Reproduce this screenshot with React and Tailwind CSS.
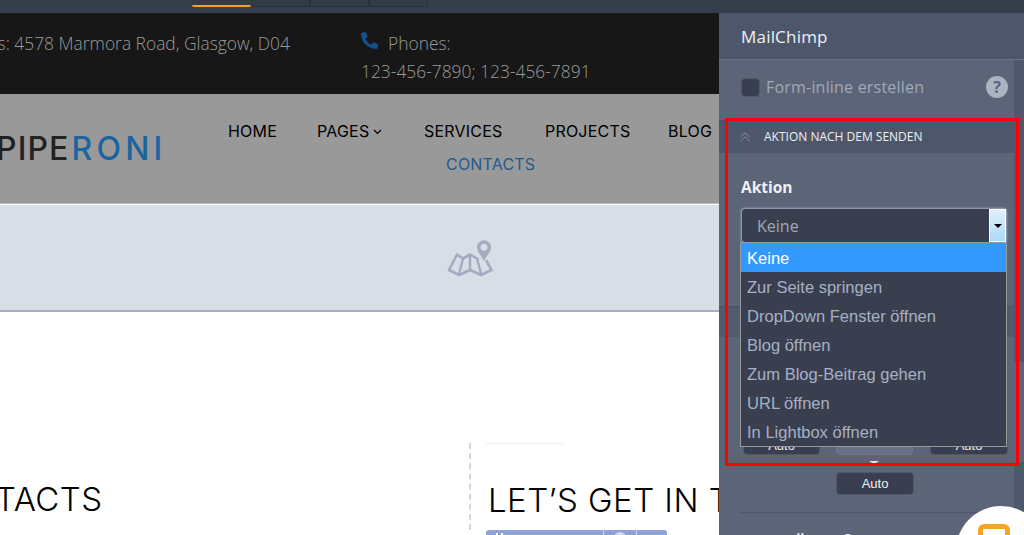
import React from "react";
import { FaPhone } from "react-icons/fa";

const opts = ["Keine","Zur Seite springen","DropDown Fenster öffnen","Blog öffnen","Zum Blog-Beitrag gehen","URL öffnen","In Lightbox öffnen"];

function MapIcon() {
  return (
    <svg width="46" height="38" viewBox="0 0 46 38" fill="none">
      <path d="M31 19 L29 18 L23 14.5 L16 18.5 L10 14.5 L2 30 L12 35 L23 30 L34 35 L44.5 30 L39 20" stroke="#a5abc2" strokeWidth="2.6" strokeLinejoin="round" />
      <path d="M16 18.5 L12 34 M23 14.5 L23 30 M30 18 L34 34" stroke="#a5abc2" strokeWidth="2.4" />
      <path d="M37 21 C34 15 30 12 30 7.2 A7 7 0 0 1 44 7.2 C44 12 40 15 37 21 Z M37 3.7 A3.5 3.5 0 1 0 37 10.7 A3.5 3.5 0 1 0 37 3.7 Z" fill="#a5abc2" fillRule="evenodd" />
    </svg>
  );
}

export default function App() {
  return (
    <div className="relative w-[1024px] h-[535px] overflow-hidden bg-white font-['Open_Sans',sans-serif]">
      <div className="h-[13px] bg-[#353f4b] pl-[192px] flex items-start">
        <div className="w-[59px] h-[7px] border-b-2 border-[#f5a11e] bg-[#323b47] rounded-b-[2px]" />
        <div className="w-[59px] h-[7px] border border-t-0 border-[#29313c] bg-[#323b47] rounded-b-[2px]" />
        <div className="w-[59px] h-[7px] border border-t-0 border-[#29313c] bg-[#323b47] rounded-b-[2px]" />
        <div className="w-[59px] h-[7px] border border-t-0 border-[#29313c] bg-[#323b47] rounded-b-[2px]" />
      </div>
      <div className="flex h-[522px]">
        <div className="w-[719px] shrink-0 overflow-hidden">
          <div className="h-[81px] bg-[#171717] flex text-[17.4px] font-light text-[#9a9a9a] whitespace-nowrap">
            <div className="ml-[-58px] w-[419px] shrink-0 pt-[17px] leading-[26px]">Address: 4578 Marmora Road, Glasgow, D04</div>
            <div className="pt-[17px] leading-[28px]">
              <div className="flex items-center h-[26px]">
                <FaPhone className="text-[#14508a] text-[17px] mb-[5px] -scale-x-100" />
                <span className="ml-[10px]">Phones:</span>
              </div>
              <div className="mt-[1px]">123-456-7890; 123-456-7891</div>
            </div>
          </div>
          <div className="h-[110px] bg-[#999999] flex border-b border-[#b9bcc4]">
            <div className="ml-[-4px] w-[232px] shrink-0 pt-[35px] text-[32px] leading-[40px] tracking-[1.1px] text-[#222222] font-['Inter',sans-serif] font-medium">
              PIPE<span className="text-[#1b659f] tracking-[4.2px] ml-[2px]">RONI</span>
            </div>
            <div className="pt-[27px] text-[16px] leading-[20px] tracking-[0.2px] text-black whitespace-nowrap font-['Inter',sans-serif] font-normal">
              <div className="flex">
                <span className="w-[89px]">HOME</span>
                <span className="w-[107px] flex items-center">PAGES<svg width="9" height="6" viewBox="0 0 9 6" className="ml-[4px] mt-[2px]" fill="none"><path d="M1 1 L4.5 4.5 L8 1" stroke="#000" strokeWidth="1.2" /></svg></span>
                <span className="w-[121px]">SERVICES</span>
                <span className="w-[123px]">PROJECTS</span>
                <span>BLOG</span>
              </div>
              <div className="mt-[13px] ml-[218px] text-[#255a8c]">CONTACTS</div>
            </div>
          </div>
          <div className="h-[108px] bg-[#d9dde5] border-t border-white border-b-2 border-b-[#a9afc2] pl-[447px] pt-[35px]">
            <MapIcon />
          </div>
          <div className="flex h-[223px] pt-[131px]">
            <div className="w-[469px] shrink-0">
              <div className="ml-[-5px] pt-[36px] text-[33px] leading-[40px] font-['Inter',sans-serif] font-light text-black tracking-[0.45px] whitespace-nowrap">TACTS</div>
            </div>
            <div className="border-l-2 border-dashed border-[#d6d6d6] h-[87px] pl-[15px] flex-1">
              <div className="w-[77px] h-px bg-[#eeeeee]" />
              <div className="mt-[36px] ml-[2px] text-[33px] leading-[40px] font-['Inter',sans-serif] font-light text-black tracking-[0.45px] whitespace-nowrap">LET’S GET IN TOUCH</div>
              <div className="mt-[10px] w-[181px] h-[8px] rounded-t-[3px] bg-[#8ea3d3] flex justify-end overflow-hidden">
                <div className="mr-auto ml-[10px] mt-[3px] w-[7px] h-[5px] border-x-2 border-white" />
                <div className="w-[33px] border-l border-white/50 flex justify-center"><div className="w-[12px] h-[12px] mt-[2px] rounded-full bg-white/60" /></div>
                <div className="w-[31px] border-l border-white/50" />
              </div>
            </div>
          </div>
        </div>

        <div className="w-[305px] shrink-0 bg-[#5c6478] overflow-hidden">
          <div className="h-[47px] bg-[#4d566a] border-b border-[#6a7388] pl-[22px] pt-[10px] text-[17px] leading-[28px] font-medium tracking-[0.2px] text-[#eef0f4]">MailChimp</div>
          <div className="flex h-[475px]">
            <div className="w-[295px] shrink-0">
              <div className="flex items-center h-[60px] pl-[22px] pb-[6px]">
                <div className="w-[19px] h-[19px] rounded-[4px] bg-[#3a3f50] border border-[#4f586d]" />
                <span className="ml-[6px] text-[16px] text-[#a1a8b8] tracking-[0.2px]">Form-inline erstellen</span>
                <div className="ml-auto mr-[6px] w-[22px] h-[22px] rounded-full bg-[#aab4c0] text-[#5c6478] text-[16px] font-bold flex items-center justify-center">?</div>
              </div>
              <div className="h-[33px] bg-[#4d566a] flex items-center pl-[21px] border-t border-[#474f62]">
                <svg width="10" height="10" viewBox="0 0 10 10" fill="none" stroke="#858da0" strokeWidth="1"><path d="M0.5 5 L5 1 L9.5 5 M0.5 9 L5 5 L9.5 9" /></svg>
                <span className="ml-[14px] text-[12px] font-normal text-[#eef0f4]">AKTION NACH DEM SENDEN</span>
              </div>
              <div className="pl-[22px] pt-[22px] text-[15.5px] leading-[24px] font-bold text-[#eef0f4]">Aktion</div>
              <div className="mt-[9px] ml-[22px] w-[266px] h-[35px] bg-[#3a3f50] rounded-[4px] border border-[#8d94a6] flex text-[16px] text-[#a1a8b8] shadow-[0_0_2px_rgba(190,225,255,0.7)]">
                <span className="ml-[15px] mt-[5px]">Keine</span>
                <div className="ml-auto w-[17px] h-[33px] border border-white bg-gradient-to-b from-[#dff0fb] to-[#aed9f5] flex items-center justify-center">
                  <div className="w-0 h-0 border-x-[4px] border-x-transparent border-t-[4px] border-t-black" />
                </div>
              </div>
              <div className="mt-[63px] h-[31px] bg-[#525a6e] border-t border-[#4a5266]" />
              <div className="mt-[99px] ml-[24px] flex text-[13px] leading-[17px] text-center text-[#eef0f4] font-['Liberation_Sans',sans-serif]">
                <div className="w-[77px] h-[19px] bg-[#3a3f50] rounded-[4px] border border-[#4f586d]">Auto</div>
                <div className="ml-[16px] w-[77px] h-[19px] bg-[#667087] rounded-[4px] border border-[#6d768b]" />
                <div className="ml-[17px] w-[78px] h-[19px] bg-[#3a3f50] rounded-[4px] border border-[#4f586d]">Auto</div>
              </div>
              <div className="mt-[6px] ml-[150px] w-0 h-0 border-x-[5px] border-x-transparent border-t-[3px] border-t-[#e3e6ec]" />
              <div className="mt-[8px] ml-[117px] w-[78px] h-[23px] bg-[#3a3f50] rounded-[4px] border border-[#4f586d] text-[13px] leading-[21px] text-center text-[#eef0f4] font-['Liberation_Sans',sans-serif]">Auto</div>
              <div className="mt-[17px] ml-[21px] h-px bg-[#4d566a]" />
              <div className="mt-[15px] ml-[36px] text-[15px] leading-[20px] font-semibold text-[#eef0f4] whitespace-nowrap">ausrollen<span className="ml-[22px]">?</span></div>
            </div>
            <div className="w-[10px] bg-[#4f576b] pt-[302px]">
              <div className="h-[100px] bg-[#5c6478]" />
            </div>
          </div>
        </div>
      </div>

      <div className="absolute left-[740px] top-[242px] w-[267px] h-[205px] border border-[#9a9a9a] bg-[#3a3f50] font-['Liberation_Sans',sans-serif] text-[16.55px] leading-[31px] text-[#a6b0c4]">
        {opts.map((o, i) => (
          <div key={o} className={i === 0 ? "h-[29px] pl-[6px] bg-[#3399ff] text-white" : "h-[29px] pl-[6px]"}>{o}</div>
        ))}
      </div>
      <div className="absolute left-[725px] top-[118px] w-[294px] h-[348px] border-[3px] border-[#ff0000] pointer-events-none" />
      <div className="absolute left-[956px] top-[506px] w-[90px] h-[90px] rounded-full bg-white flex justify-center pt-[18px] pr-[14px]">
        <div className="w-[32px] h-[32px] rounded-[6px] border-[5px] border-[#f5a623]" />
      </div>
    </div>
  );
}
